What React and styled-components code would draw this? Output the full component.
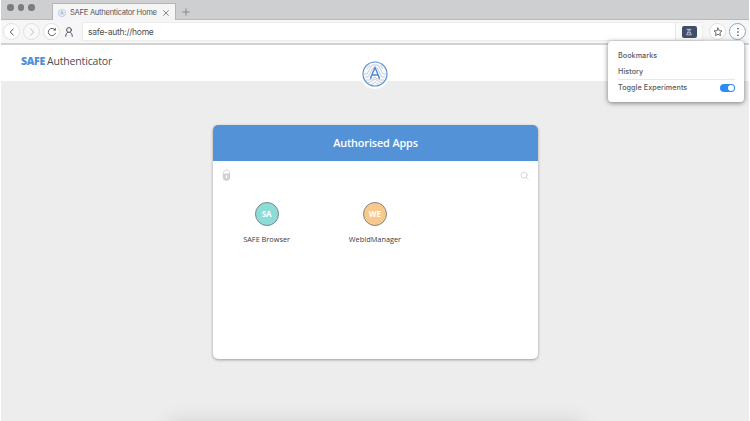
import React from "react";
import styled, { createGlobalStyle } from "styled-components";

const Global = createGlobalStyle`
  * { box-sizing: border-box; }
  body { margin: 0; background: #fff; overflow: hidden; }
`;

const Window = styled.div`
  position: relative;
  width: 748px;
  height: 421px;
  margin: 0 1px;
  display: flex;
  flex-direction: column;
  overflow: hidden;
  background: #ededed;
  font-family: "Open Sans", sans-serif;
`;

const TabBar = styled.div`
  flex: none;
  height: 20px;
  display: flex;
  align-items: flex-end;
  background: #cecfd1;
  border-bottom: 1px solid #b9b9bb;
`;

const Lights = styled.div`
  width: 51px;
  height: 19px;
  padding: 4px 0 0 6px;
  display: flex;
  gap: 4px;
`;

const Light = styled.span`
  width: 6.5px;
  height: 6.5px;
  border-radius: 50%;
  background: #7b7c7e;
`;

const Tab = styled.div`
  width: 124px;
  height: 17px;
  margin-bottom: -1px;
  padding: 1px 6px 0 5px;
  display: flex;
  align-items: center;
  background: #f5f5f6;
  border: 1px solid #b5b5b7;
  border-bottom: 0;
`;

const TabTitle = styled.span`
  flex: 1;
  margin-left: 4px;
  font: 400 7.6px/16px Inter, sans-serif;
  letter-spacing: -0.28px;
  white-space: nowrap;
  color: #555659;
`;

const NewTab = styled.div`
  height: 15px;
  margin-left: 6px;
  display: flex;
  align-items: center;
`;

const Toolbar = styled.div`
  flex: none;
  height: 25px;
  padding-left: 2px;
  display: flex;
  align-items: center;
  background: #f6f6f7;
  border-bottom: 2px solid #d3d3d4;
`;

const RoundButton = styled.div`
  flex: none;
  width: 17px;
  height: 17px;
  margin-right: ${(p) => p.$gap || 0}px;
  display: grid;
  place-items: center;
  border-radius: 50%;
  border: 1px solid ${(p) => p.$ring || "#e0e0e1"};
  background: ${(p) => p.$fill || "#fff"};
`;

const Account = styled.div`
  width: 22px;
  padding-right: 4px;
  display: grid;
  place-items: center;
`;

const Address = styled.div`
  width: 621px;
  height: 19px;
  margin-right: 6px;
  display: flex;
  justify-content: space-between;
  background: #fff;
  border: 1px solid #ececed;
`;

const Url = styled.span`
  padding-left: 5px;
  font: 400 8.5px/18px Inter, sans-serif;
  letter-spacing: -0.26px;
  color: #4d4e51;
`;

const AddressEnd = styled.div`
  width: 27px;
  display: grid;
  place-items: center;
  background: #fafafa;
  border-left: 1px solid #e7e7e8;
`;

const Flask = styled.div`
  width: 15px;
  height: 12px;
  display: grid;
  place-items: center;
  border-radius: 2px;
  background: #3f4f6a;
`;

const Header = styled.header`
  position: relative;
  flex: none;
  height: 36px;
  padding: 8px 20px;
  background: #fff;
`;

const Brand = styled.div`
  font-size: 10.5px;
  line-height: 17px;
  letter-spacing: -0.15px;
  color: #4d4e52;
  white-space: nowrap;
  b {
    margin-right: 2px;
    font-weight: 800;
    letter-spacing: -0.3px;
    color: #5291d6;
  }
`;

const Emblem = styled.div`
  position: absolute;
  left: 359px;
  top: 14px;
  width: 30px;
  height: 30px;
  display: grid;
  place-items: center;
  border-radius: 50%;
  background: #fff;
`;

const Card = styled.main`
  width: 325px;
  height: 234px;
  margin: 44px 0 0 212px;
  overflow: hidden;
  border-radius: 5px;
  background: #fff;
  box-shadow: 0 1px 3px rgba(0, 0, 0, 0.35);
`;

const CardTitle = styled.h1`
  height: 36px;
  margin: 0;
  font-size: 10.9px;
  line-height: 36px;
  font-weight: 600;
  letter-spacing: -0.15px;
  text-align: center;
  color: #fff;
  background: #5392d6;
`;

const Tools = styled.div`
  height: 28px;
  padding: 0 9px;
  display: flex;
  align-items: center;
  justify-content: space-between;
`;

const Apps = styled.div`
  display: grid;
  grid-template-columns: repeat(3, 108.3px);
  padding-top: 13px;
`;

const AppItem = styled.div`
  display: flex;
  flex-direction: column;
  align-items: center;
  margin-left: -1px;
  font-size: 7.35px;
  line-height: 12px;
  color: #3b3b3d;
`;

const Avatar = styled.div`
  width: 24px;
  height: 24px;
  margin-bottom: 7px;
  border: 1px solid #7d8988;
  border-radius: 50%;
  background: ${(p) => p.$color};
  color: #fff;
  font-size: 8px;
  line-height: 22px;
  font-weight: 700;
  text-align: center;
`;

const Menu = styled.div`
  position: absolute;
  left: 607px;
  top: 41px;
  width: 136px;
  height: 61px;
  padding: 7px 9px 7px 10px;
  border-radius: 4px;
  background: #fff;
  box-shadow: 0 1px 5px rgba(0, 0, 0, 0.5);
  font: 500 7.2px/16px Inter, sans-serif;
  letter-spacing: 0.06px;
  color: #58595d;
`;

const MenuItem = styled.div`
  height: ${(p) => (p.$divided ? 16 : 15.5)}px;
  padding-top: ${(p) => (p.$divided ? 0 : 1)}px;
  display: flex;
  align-items: center;
  justify-content: space-between;
  border-top: ${(p) => (p.$divided ? "1px solid #e8e8e9" : "0")};
`;

const Toggle = styled.span`
  width: 15px;
  height: 8px;
  padding: 1px;
  display: flex;
  justify-content: flex-end;
  border-radius: 4px;
  background: #2b8cf4;
  &::after {
    content: "";
    width: 6px;
    height: 6px;
    border-radius: 50%;
    background: #fff;
  }
`;

const BottomShade = styled.div`
  position: absolute;
  left: 170px;
  top: 427px;
  width: 408px;
  height: 20px;
  box-shadow: 0 0 22px 3px rgba(0, 0, 0, 0.15);
`;

const Logo = ({ size }) => (
  <svg width={size} height={size} viewBox="0 0 26 26" fill="none">
    <circle cx="13" cy="13" r="12" fill="#fbfcfe" stroke="#5a94d2" strokeWidth="1.2" />
    <g stroke="#b9bfd0" strokeWidth=".8">
      <path d="M2 13h3l5-9h6l5 9h3M3 16h3l5-9h4l5 9h3M4 19h4l2-3M22 19h-4l-2-3" />
      <path d="m6 22 4-2 3-2 3 2 4 2M9 24l4-3 4 3M8 18h3l2-2 2 2h3M5 8l3-4M21 8l-3-4" />
    </g>
    <path d="m8.3 17.5 4.7-11 4.7 11M10 14h6" stroke="#4c88cd" strokeWidth="1.4" />
  </svg>
);

const Icon = ({ size = 10, color = "#505154", width = 1, children }) => (
  <svg width={size} height={size} viewBox="0 0 10 10" fill="none" stroke={color}
    strokeWidth={width} strokeLinecap="round" strokeLinejoin="round">
    {children}
  </svg>
);

const apps = [
  { initials: "SA", name: "SAFE Browser", color: "#8cddd7" },
  { initials: "WE", name: "WebIdManager", color: "#f8c88d" },
];

export default function App() {
  return (
    <>
      <Global />
      <Window>
        <TabBar>
          <Lights><Light /><Light /><Light /></Lights>
          <Tab>
            <Logo size={8} />
            <TabTitle>SAFE Authenticator Home</TabTitle>
            <Icon size={6} color="#68696c" width={1.3}><path d="m1 1 8 8M9 1 1 9" /></Icon>
          </Tab>
          <NewTab><Icon size={8} color="#77787b"><path d="M5 1v8M1 5h8" /></Icon></NewTab>
        </TabBar>

        <Toolbar>
          <RoundButton $gap={3}><Icon><path d="M6.3 2 3.2 5l3.1 3" /></Icon></RoundButton>
          <RoundButton $gap={3} $fill="#f8f8f8"><Icon color="#b9babc"><path d="m3.7 2 3.1 3-3.1 3" /></Icon></RoundButton>
          <RoundButton><Icon color="#606164"><path d="M8 2.8A3.7 3.7 0 1 0 8.5 6.3M8.4 1.5v1.6H6.9" /></Icon></RoundButton>
          <Account><Icon color="#465368"><circle cx="5" cy="3" r="2.4" /><path d="M1.7 9.3c0-2.2 1.1-3.6 2-4M8.3 9.3c0-2.2-1.1-3.6-2-4" /></Icon></Account>
          <Address>
            <Url>safe-auth://home</Url>
            <AddressEnd>
              <Flask><Icon size={8} color="#c9d1df" width={1}><path d="M2.5 1.7h5M4 1.7v2.5L2 8.5h6L6 4.2V1.7M3.5 6h3" /></Icon></Flask>
            </AddressEnd>
          </Address>
          <RoundButton $gap={3}><Icon color="#5e5f62" width={0.9}><path d="m5 1 1.2 2.6 2.8.3-2.1 1.9.6 2.8L5 7.2 2.5 8.6l.6-2.8L1 3.9l2.8-.3z" /></Icon></RoundButton>
          <RoundButton $ring="#79aad4"><Icon color="#333" width={1.6}><path d="M5 1.7h0M5 5h0M5 8.3h0" /></Icon></RoundButton>
        </Toolbar>

        <Header>
          <Brand><b>SAFE</b>Authenticator</Brand>
          <Emblem><Logo size={26} /></Emblem>
        </Header>

        <Card>
          <CardTitle>Authorised Apps</CardTitle>
          <Tools>
            <svg width="9" height="12" viewBox="0 0 9 12" fill="none">
              <path d="M1.5 5V4a3 3 0 0 1 6 0v1" stroke="#dadada" />
              <path d="M1.3 5h6.4v3.5a3.2 3 0 0 1-6.4 0z" fill="#d2d2d2" stroke="#c4c4c4" strokeWidth=".6" />
              <path d="M4.5 6.3v2.9" stroke="#fff" strokeWidth="1.2" />
            </svg>
            <Icon size={9} color="#cdcdcd" width={0.9}><circle cx="4.5" cy="4.5" r="3.4" /><path d="m7 7 2.3 2.3" /></Icon>
          </Tools>
          <Apps>
            {apps.map((app) => (
              <AppItem key={app.name}>
                <Avatar $color={app.color}>{app.initials}</Avatar>
                {app.name}
              </AppItem>
            ))}
          </Apps>
        </Card>

        <Menu>
          <MenuItem>Bookmarks</MenuItem>
          <MenuItem>History</MenuItem>
          <MenuItem $divided>Toggle Experiments<Toggle /></MenuItem>
        </Menu>
        <BottomShade />
      </Window>
    </>
  );
}
